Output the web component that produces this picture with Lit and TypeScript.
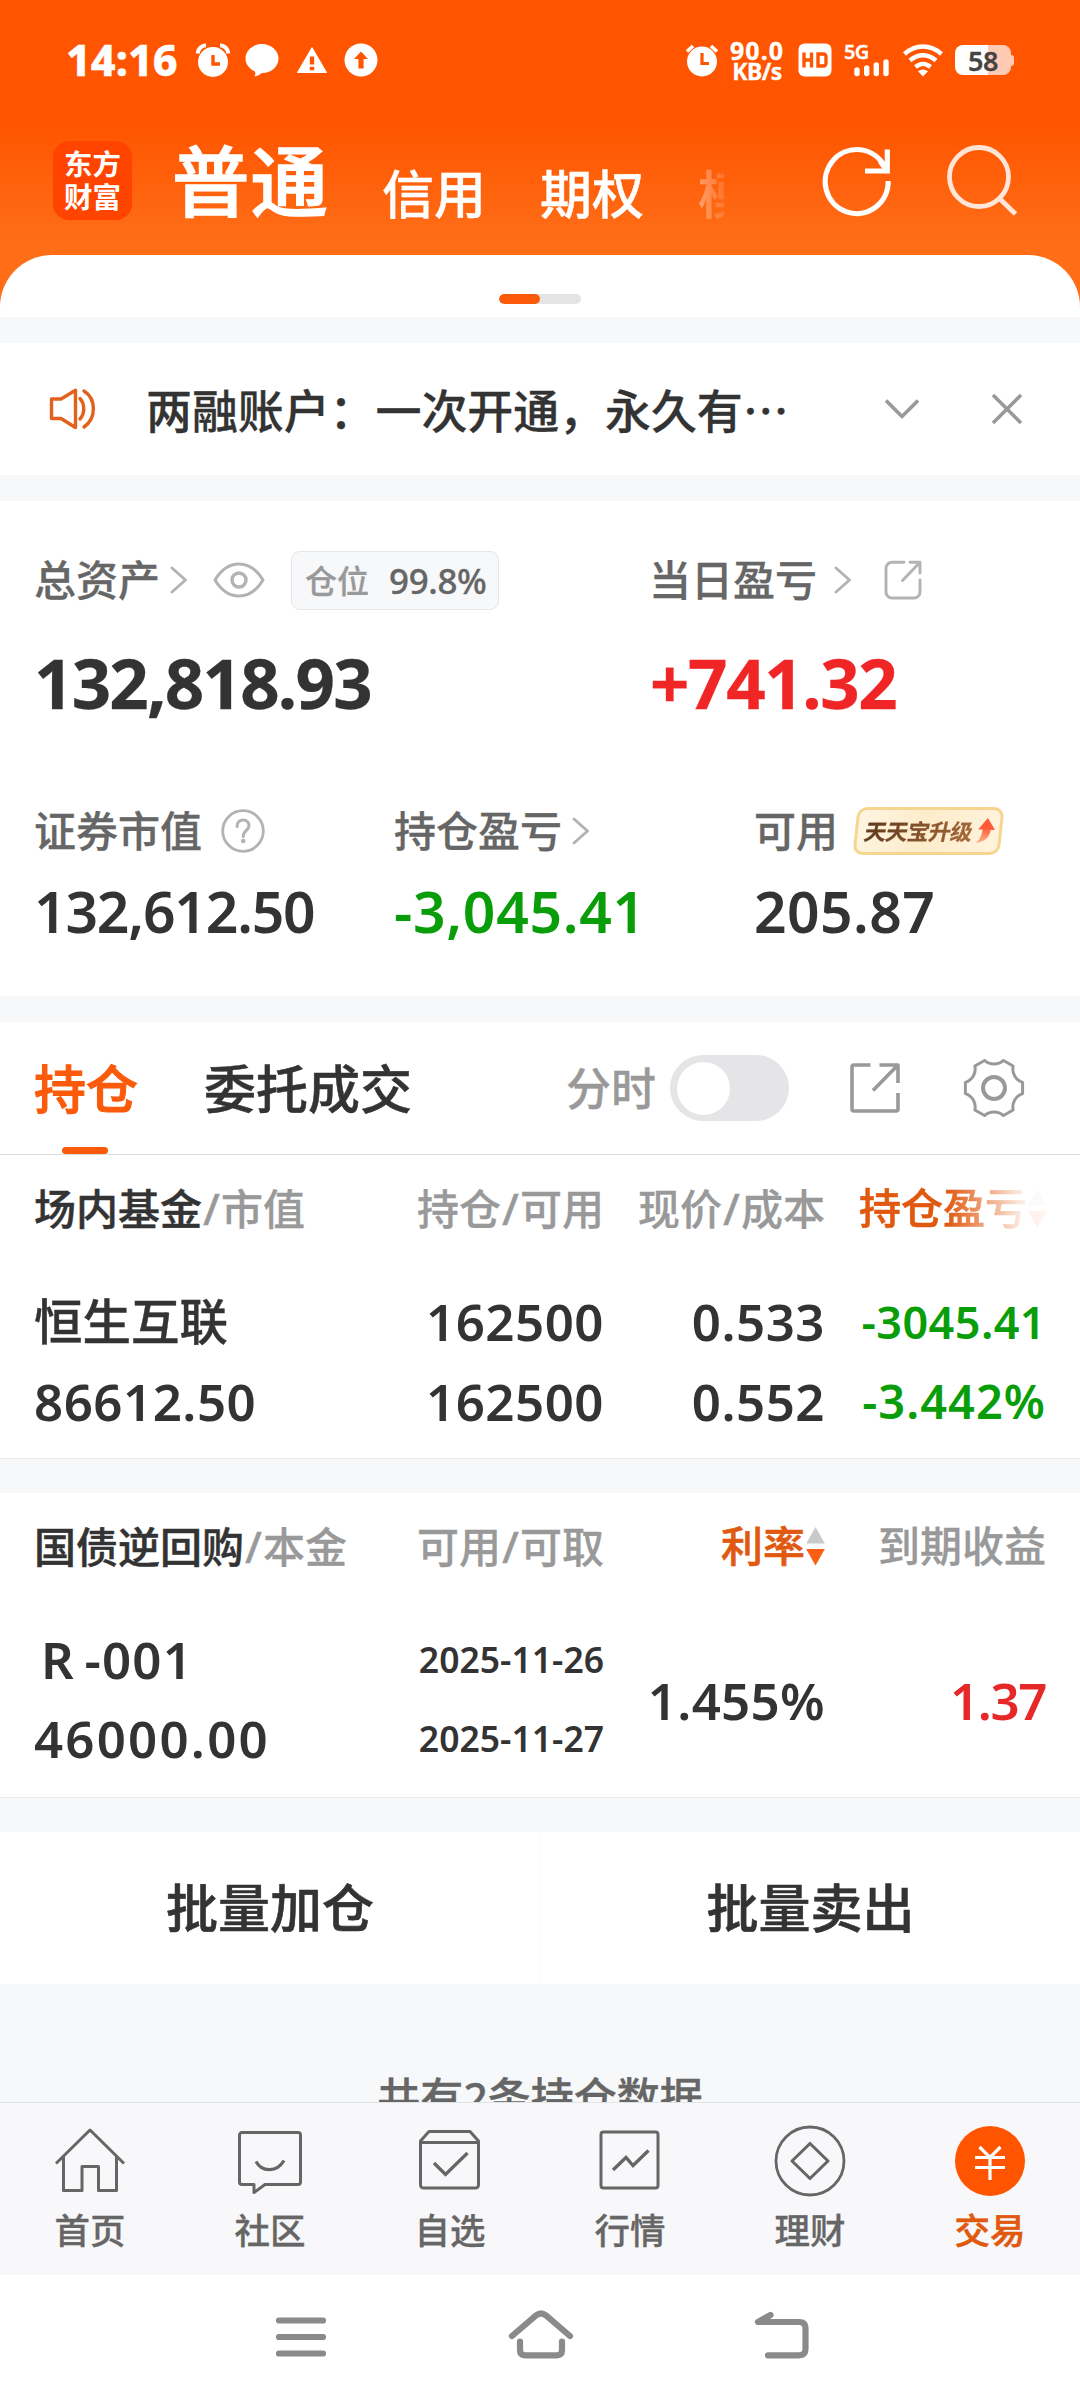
import { LitElement, html, css, svg, nothing } from "lit";
import { customElement, property } from "lit/decorators.js";
import { classMap } from "lit/directives/class-map.js";

/* Six-lobed cog outline around (0,0), lobes at radius 30. */
const cog = (() => {
  let d = "";
  for (let i = 0; i < 6; i++) {
    const a = (-i * Math.PI) / 3;
    const rot = (x: number, y: number) =>
      `${(x * Math.cos(a) - y * Math.sin(a)).toFixed(2)} ${(x * Math.sin(a) + y * Math.cos(a)).toFixed(2)}`;
    d += i === 0 ? `M${rot(28.6, 5.6)}` : `A14 14 0 0 1 ${rot(28.6, 5.6)}`;
    d += `L${rot(28.6, -5.6)}`;
  }
  return d + `A14 14 0 0 1 28.6 5.6Z`;
})();

/* name -> [viewBox width, viewBox height, drawing] */
const ICONS: Record<string, [number, number, unknown]> = {
  alarm: [34, 34, svg`
    <circle cx="17" cy="19" r="15" fill="currentColor"/>
    <path d="M1.6 10.5A9 9 0 0 1 10 2.2M32.4 10.5A9 9 0 0 0 24 2.2" stroke="currentColor" stroke-width="4"/>
    <path d="M17 12v9h7" stroke="#ff5500" stroke-width="3.4"/>`],
  alarmThin: [34, 34, svg`
    <circle cx="17" cy="18.5" r="15" fill="currentColor"/>
    <path d="M2 8.5L8 3M32 8.5L26 3" stroke="currentColor" stroke-width="3.6"/>
    <path d="M17 10v10.500h7" stroke="#ff5500" stroke-width="3.2"/>`],
  bubble: [34, 34, svg`
    <path d="M17 1C26 1 33.500 7.500 33.500 15.500C33.500 24 26 30 17 30C15 31.500 12.500 33 9.500 33.500C10.500 31.500 10.500 30 10 28.500C4.500 26 .5 21.500 .5 15.500C.5 7.500 8 1 17 1Z" fill="currentColor"/>`],
  warn: [30, 26, svg`
    <path d="M15 .6L29.500 25.500H.5Z" fill="currentColor" stroke="currentColor" stroke-linejoin="round"/>
    <path d="M15 9.500v8M15 19.800v3.400" stroke="#ff5500" stroke-width="4.400"/>`],
  up: [34, 34, svg`
    <circle cx="17" cy="17" r="16.500" fill="currentColor"/>
    <path d="M17 8.500L24 16h-4.400v9.500h-5.200V16H10Z" fill="#ff5500"/>`],
  hd: [34, 34, svg`
    <rect x=".5" y=".5" width="33" height="33" rx="6" fill="currentColor"/>
    <path d="M6 9.500v15M6 17h7M13.500 9.500v15M20 11h5.500a2.500 2.500 0 0 1 2.500 2.500v7a2.500 2.500 0 0 1-2.500 2.500H20Z" stroke="#ff5500" stroke-width="3.400"/>`],
  bars: [36, 17, svg`
    <path d="M3 11v3.500M12.700 9v5.500M22.300 6v8.500M32 3v11.500" stroke="currentColor" stroke-width="5.400" stroke-linecap="round"/>`],
  wifi: [42, 34, svg`
    <path d="M2.500 11C13.500 1 28.500 1 39.500 11M8 17.500C16 10.500 26 10.500 34 17.500M13.500 24C18 20 24 20 28.500 24" stroke="currentColor" stroke-width="4.400"/>
    <path d="M21 33.500L16 28.300Q21 24.500 26 28.300Z" fill="currentColor"/>`],
  refresh: [72, 72, svg`
    <path d="M66.200 35A31.500 32 0 1 1 62.500 20.500M65.300 3.500V25H43" stroke="currentColor" stroke-width="5.200"/>
    <path d="M58 15L65 25" stroke="currentColor" stroke-width="5"/>`],
  search: [72, 72, svg`
    <circle cx="32" cy="33" r="29.500" stroke="currentColor" stroke-width="4.800"/>
    <path d="M53 55L68.500 70" stroke="currentColor" stroke-width="4.800"/>`],
  speaker: [50, 44, svg`
    <path d="M3.500 12H13L27.500 3.200V40.500L13 31.500H3.500Z" stroke="currentColor" stroke-width="3.400" stroke-linejoin="round"/>
    <path d="M32 11.500C37 17 37 26.500 32 32M36 4C48.500 12 48.500 31 36 40" stroke="currentColor" stroke-width="3.400" stroke-linecap="round"/>`],
  down: [36, 22, svg`<path d="M2 2.500L18 18.500L34 2.500" stroke="currentColor" stroke-width="3.600"/>`],
  close: [32, 32, svg`<path d="M2 2L30 30M30 2L2 30" stroke="currentColor" stroke-width="3.600"/>`],
  right: [18, 28, svg`<path d="M2 2L15.500 14L2 26" stroke="currentColor" stroke-width="3" stroke-linecap="round" stroke-linejoin="round"/>`],
  eye: [52, 36, svg`
    <path d="M2 18C8 8 16 2 26 2S44 8 50 18C44 28 36 34 26 34S8 28 2 18Z" stroke="currentColor" stroke-width="3" stroke-linejoin="round"/>
    <circle cx="26" cy="18" r="7" stroke="currentColor" stroke-width="3.400"/>`],
  shareRound: [38, 40, svg`
    <path d="M20 2.200H8A6 6 0 0 0 2 8V32A6 6 0 0 0 8 38H30A6 6 0 0 0 36 32V20M26 2.200H36V13M36 2.200L18.500 20.500" stroke="currentColor" stroke-width="2.900" stroke-linecap="round" stroke-linejoin="round"/>`],
  help: [44, 44, svg`
    <circle cx="22" cy="22" r="20.300" stroke="currentColor" stroke-width="2.800"/>
    <path d="M16 17.500C16 9 28 9 28 16.500C28 21.500 22.200 21.500 22.200 27.500" stroke="currentColor" stroke-width="3" stroke-linecap="round"/>
    <circle cx="22.200" cy="32" r="2.300" fill="currentColor"/>`],
  share: [52, 52, svg`
    <path d="M21.500 3H5A2 2 0 0 0 3 5V47A2 2 0 0 0 5 49H47A2 2 0 0 0 49 47V31M30.500 3H49V21M49 3L24 28.500" stroke="currentColor" stroke-width="3.600" stroke-linejoin="round"/>`],
  gear: [62, 62, svg`
    <g transform="translate(31 31)"><path d="${cog}" stroke="currentColor" stroke-width="3" stroke-linejoin="round"/>
    <circle r="11" stroke="currentColor" stroke-width="4"/></g>`],
  sort: [19, 40, svg`
    <path d="M9.500 1L18.800 17.500H.2Z" fill="#c9c9cb"/><path d="M9.500 39.500L18.800 23H.2Z" fill="#fa5f14"/>`],
  home: [72, 72, svg`
    <path d="M2 39.500L36 6L70 39.500M9.500 33V66.500H28V42.500H44.500V66.500H62.500V33" stroke="currentColor" stroke-width="3" stroke-linejoin="round"/>`],
  chat: [72, 72, svg`
    <path d="M7 8.500H64A2.500 2.500 0 0 1 66.500 11V58A2.500 2.500 0 0 1 64 60.500H31L20 68.500V60.500H8A2.500 2.500 0 0 1 5.500 58V11A2.500 2.500 0 0 1 8 8.500Z" stroke="currentColor" stroke-width="3" stroke-linejoin="round"/>
    <path d="M22 37.500C28 48.500 43 48.500 50 36.500" stroke="currentColor" stroke-width="3.200"/>`],
  box: [72, 72, svg`
    <path d="M6.500 17L15 7.500H56L64.500 17V61A3 3 0 0 1 61.500 64H9.500A3 3 0 0 1 6.500 61ZM6.500 18.500H64.500" stroke="currentColor" stroke-width="3" stroke-linejoin="round"/>
    <path d="M20 39L31.500 50.500L53.500 29" stroke="currentColor" stroke-width="3.300"/>`],
  chart: [72, 72, svg`
    <rect x="7" y="8" width="57" height="56" rx="2.500" stroke="currentColor" stroke-width="3"/>
    <path d="M19 46L32 33.500L39 41.500L54.500 26.500" stroke="currentColor" stroke-width="3.300"/>`],
  coin: [72, 72, svg`
    <circle cx="36" cy="37" r="34" stroke="currentColor" stroke-width="2.800"/>
    <path d="M36 19.500L54 37L36 54.500L18 37Z" stroke="currentColor" stroke-width="3.100" stroke-linejoin="round"/>`],
  yuan: [72, 72, svg`
    <circle cx="36" cy="37" r="35" fill="#ff5500"/>
    <path d="M25.500 23L36 33.500L46.500 23M36 33.500V56M21 33.500H51M21 43.500H51" stroke="#fff" stroke-width="3.200"/>`],
  sysMenu: [52, 42, svg`<path d="M4 4.500H48M4 21H48M4 37.500H48" stroke="currentColor" stroke-width="6.200" stroke-linecap="round"/>`],
  sysHome: [66, 50, svg`
    <path d="M4 27L28 6.500Q33 2.500 38 6.500L62 27M12 32.500V41Q12 46.300 17 46.300H49Q54 46.300 54 41V32.500" stroke="currentColor" stroke-width="6.200" stroke-linecap="round"/>`],
  sysBack: [56, 50, svg`
    <path d="M16.500 6L4 13H45Q51.500 13 51.500 19V40Q51.500 46.300 45 46.300H14" stroke="currentColor" stroke-width="6.200" stroke-linecap="round" stroke-linejoin="round"/>`],
};

@customElement("app-icon")
class AppIcon extends LitElement {
  @property() name = "";
  static styles = css`
    :host { display: inline-flex; flex: none; }
    svg { display: block; overflow: visible; }
  `;
  render() {
    const icon = ICONS[this.name];
    if (!icon) return nothing;
    const [w, h, body] = icon;
    return html`<svg width=${w} height=${h} viewBox="0 0 ${w} ${h}" fill="none">${body}</svg>`;
  }
}

const TABS = [
  { icon: "home", label: "首页" },
  { icon: "chat", label: "社区" },
  { icon: "box", label: "自选" },
  { icon: "chart", label: "行情" },
  { icon: "coin", label: "理财" },
  { icon: "yuan", label: "交易", on: true },
];

@customElement("app-root")
class AppRoot extends LitElement {
  static styles = css`
    :host {
      display: flex; flex-direction: column; width: 1080px; height: 2400px; overflow: hidden;
      background: #f7f8fa; color: #333; white-space: nowrap;
      font-family: "Noto Sans", "Noto Sans CJK SC", sans-serif; font-weight: 500; line-height: 1;
      -webkit-text-stroke: .3px currentColor;
    }
    * { box-sizing: border-box; }
    .row { display: flex; align-items: center; }

    .top { height: 317px; flex: none; display: flex; flex-direction: column; color: #fff;
      background: linear-gradient(#ff5500 0, #ff5500 125px, #ff6d17 240px, #ff6d17 100%); }
    .status { height: 120px; padding-left: 66px; }
    .clock { width: 130px; font-size: 43px; font-weight: 800; padding-bottom: 2px; letter-spacing: 0; }
    .status .g1 { margin-right: 15px; }
    .status .g2 { margin-right: 18px; }
    .status .g3 { margin-right: 17px; }
    .net { width: 62px; margin: 0 10px 0 7px; text-align: center; font-weight: 700; }
    .net .a { font-size: 25px; line-height: 22px; letter-spacing: 1px; }
    .net .b { font-size: 23px; line-height: 21px; letter-spacing: -.6px; }
    .right { margin-left: 307px; }
    .sig { width: 46px; height: 32px; margin: 0 12px 0 12px; display: flex; flex-direction: column; align-items: flex-end; justify-content: flex-end; }
    .sig .g { align-self: flex-start; font-size: 20px; line-height: 14px; font-weight: 600; letter-spacing: -.7px; }
    .batt { width: 56px; height: 30px; margin-left: 11px; border-radius: 8px; color: #444; font-size: 27px; font-weight: 600; letter-spacing: -.4px;
      display: flex; align-items: center; justify-content: center; background: linear-gradient(90deg, #fff 33px, #ffcab4 33px); }
    .nub { width: 3px; height: 11px; background: #ffcab4; border-radius: 0 3px 3px 0; }

    .nav { height: 135px; padding-left: 53px; align-items: flex-start; }
    .logo { width: 79px; height: 79px; margin-top: 21px; border-radius: 16px; background: #ff4400; display: grid; place-content: center;
      font-size: 28.500px; line-height: 33px; font-weight: 700; -webkit-text-stroke-width: 0; }
    .acct { font-size: 52px; line-height: 60px; margin: 45px 0 0 54px; -webkit-text-stroke-width: .4px; }
    .acct.on { font-size: 77.500px; line-height: 90px; margin: 16px 0 0 40px; letter-spacing: 1px; width: 160px; -webkit-text-stroke-width: 1.300px; }
    .acct.first { margin: 44px 0 0 50px; }
    .acct.next { margin-top: 44px; }
    .acct.fade { margin-top: 44px; width: 26px; overflow: hidden; -webkit-mask-image: linear-gradient(90deg, rgba(0,0,0,.38), rgba(0,0,0,.12)); mask-image: linear-gradient(90deg, rgba(0,0,0,.38), rgba(0,0,0,.12)); }
    .nav .ic1 { margin: 26px 0 0 98px; }
    .nav .ic2 { margin: 24px 0 0 53px; opacity: .84; }
    .sheet { flex: 1; background: #fff; border-radius: 52px 52px 0 0; display: flex; justify-content: center; padding-top: 39px; }
    .pager { width: 82px; height: 10px; border-radius: 5px; background: #e4e4e4; overflow: hidden; }
    .pager .dot { width: 41px; height: 10px; border-radius: 5px; background: #fb5a0b; }

    .notice { height: 132px; flex: none; margin-top: 26px; background: #fff; padding: 0 57px 0 48px; color: #e2611c; }
    .notice .msg { width: 738px; margin-left: 48px; color: #333; font-size: 46px; letter-spacing: -.1px; font-family: "Noto Sans CJK SC", sans-serif; line-height: 60px; padding-bottom: 2px; }
    .notice .grey { color: #999; }
    .notice .close { margin-left: 71px; }

    .assets { height: 495px; flex: none; margin-top: 26px; background: #fff; padding: 43px 34px 0; color: #666; font-size: 42px; }
    .two { display: grid; grid-template-columns: 615px 1fr; }
    .three { display: grid; grid-template-columns: 360px 360px 1fr; }
    .lab { height: 72px; }
    .lab app-icon { color: #b3b3b3; }
    .lab .c1 { margin-left: 10px; }
    .lab .eye { margin-left: 25px; }
    .lab .c2 { margin-left: 17px; }
    .lab .sh { margin-left: 32px; }
    .lab .hp { margin-left: 19px; }
    .chip { height: 59px; margin: 1px 0 0 26px; width: 208px; padding-left: 13px; border: 1px solid #e6e6e8; border-radius: 9px; background: #f7f8fa; font-size: 32px; color: #999; }
    .chip .pct { margin-left: 20px; color: #666; font-size: 35px; letter-spacing: -.4px; font-weight: 500; }
    .big { height: 100px; margin-top: 16px; color: #333; font-size: 69px; font-weight: 700; letter-spacing: -1.800px; align-items: center; }
    .big .red { letter-spacing: -1.400px; padding-left: 1px; }
    .lab.second { height: 60px; margin-top: 69px; }
    .mid { height: 70px; margin-top: 15px; color: #333; font-size: 57px; font-weight: 600; letter-spacing: -1.200px; align-items: center; -webkit-text-stroke-width: 0; }
    .mid .green { letter-spacing: .7px; }
    .mid .cash { letter-spacing: .4px; }
    .red { color: #f02626; }
    .green { color: #0a9d0a; }
    .badge { margin-left: 17px; width: 147px; height: 48px; border: 3px solid #f6d68f; border-radius: 10px; transform: skewX(-6deg);
      background: linear-gradient(100deg, #fef5e2, #fdeccb 45%, #fff3dc); padding-left: 7px; font-size: 22px; font-weight: 700; letter-spacing: -.5px; color: #80502c; }
    .badge .t { transform: skewX(-6deg); background: linear-gradient(90deg, #5f3a1c, #a5683a); -webkit-background-clip: text; background-clip: text; color: transparent; line-height: 30px; }
    .badge svg { margin-left: 3px; flex: none; }

    .tabs { height: 133px; flex: none; margin-top: 26px; background: #fff; border-bottom: 1px solid #dedee0; padding-left: 34px; align-items: stretch; font-size: 52px; }
    .tab { display: flex; flex-direction: column; align-items: center; line-height: 134px; height: 132px; -webkit-text-stroke-width: .5px; }
    .tab.on { color: #fa5a0a; width: 104px; -webkit-text-stroke-width: 1px; }
    .tab .bar { width: 46px; height: 7px; margin: -9px 2px 0 0; border-radius: 4px; background: #fa5a0a; flex: none; }
    .tab.b { margin-left: 66px; }
    .ctl { margin-left: 154px; color: #999; font-size: 45px; }
    .toggle { width: 119px; height: 66px; border-radius: 33px; background: #e5e5e7; margin-left: 14px; padding-left: 7px; }
    .knob { width: 53px; height: 53px; border-radius: 50%; background: #fff; }
    .ctl .s1 { margin-left: 60px; }
    .ctl .s2 { margin-left: 62px; }

    .table { flex: none; background: #fff; border-bottom: 1px solid #eaeaec; padding: 0 34px; }
    .t1 { height: 304px; padding-top: 13px; }
    .t2 { height: 305px; padding-top: 13px; margin-top: 34px; }
    .grid { display: grid; grid-template-columns: 366px 204px 221px 221px; align-items: center; }
    .grid > div { text-align: right; }
    .grid > div:first-child { text-align: left; }
    .head { height: 80px; font-size: 42px; color: #999; }
    .head .k { color: #333; -webkit-text-stroke-width: .5px; }
    .sl { margin: 0 1px; font-size: 44px; }
    .hot { color: #e0590f; display: flex; justify-content: flex-end; align-items: center; -webkit-text-stroke-width: .6px; }
    .hot app-icon { margin-left: 1px; }
    .grid > .faded { margin-right: -1px; -webkit-mask-image: linear-gradient(90deg, #000 122px, rgba(0,0,0,.12) 196px, rgba(0,0,0,.05)); mask-image: linear-gradient(90deg, #000 122px, rgba(0,0,0,.12) 196px, rgba(0,0,0,.05)); }
    .cells { font-size: 51px; letter-spacing: .5px; height: 80px; font-weight: 600; padding-bottom: 2px; -webkit-text-stroke-width: 0; }
    .cells.r1 { margin-top: 34px; }
    .cells .cn { font-size: 48.500px; letter-spacing: 0; font-weight: 500; -webkit-text-stroke-width: .4px; }
    .cells .p1 { font-size: 45px; letter-spacing: .4px; }
    .cells .p2 { font-size: 47px; letter-spacing: 1px; }
    .body2 { display: grid; grid-template-columns: 366px 204px 221px 221px; margin-top: 34px; height: 160px; font-size: 51px; font-weight: 600; align-items: center; text-align: right; letter-spacing: .5px; -webkit-text-stroke-width: 0; }
    .stack { display: grid; grid-template-rows: 79px 79px; align-items: center; height: 160px; }
    .stack.l { text-align: left; white-space: pre; letter-spacing: 2.200px; }
    .stack .rname { letter-spacing: 1.200px; padding-left: 7px; word-spacing: -5px; }
    .stack.d { font-size: 35.500px; letter-spacing: 0; }
    .body2 .rate { letter-spacing: .3px; }
    .body2 .inc { color: #e62828; letter-spacing: -1.400px; }

    .acts { height: 152px; flex: none; margin-top: 34px; display: grid; grid-template-columns: 539px 540px; gap: 1px; font-size: 52px; -webkit-text-stroke-width: .6px; }
    .act { background: #fff; display: grid; place-items: center; padding-left: 1px; }
    .count { flex: none; height: 118px; overflow: hidden; text-align: center; padding-top: 90px; font-size: 43px; line-height: 48px; color: #666; }

    .tabbar { height: 173px; flex: none; border-top: 1px solid #e2e3e5; background: #f8f8fa; display: grid; grid-template-columns: repeat(6, 180px); padding-top: 21px; color: #666; font-size: 35.500px; }
    .item { display: flex; flex-direction: column; align-items: center; }
    .item .l { line-height: 40px; margin-top: 14px; }
    .item.on { color: #e0590f; }
    .item.on .l { -webkit-text-stroke-width: .6px; }
    .sys { flex: 1; background: #fff; color: #8a8a8a; display: flex; padding-left: 275px; }
    .sys .m { margin-top: 41px; }
    .sys .h { margin: 34px 0 0 181px; }
    .sys .b { margin: 34px 0 0 180px; }
  `;

  private top() {
    return html`<div class="top">
      <div class="status row">
        <div class="clock">14:16</div>
        <app-icon class="g1" name="alarm"></app-icon>
        <app-icon class="g2" name="bubble"></app-icon>
        <app-icon class="g3" name="warn"></app-icon>
        <app-icon name="up"></app-icon>
        <app-icon class="right" name="alarmThin"></app-icon>
        <div class="net"><div class="a">90.0</div><div class="b">KB/s</div></div>
        <app-icon name="hd"></app-icon>
        <div class="sig"><div class="g">5G</div><app-icon name="bars"></app-icon></div>
        <app-icon name="wifi"></app-icon>
        <div class="batt">58</div><div class="nub"></div>
      </div>
      <div class="nav row">
        <div class="logo"><div>东方</div><div>财富</div></div>
        <div class="acct on">普通</div>
        <div class="acct first">信用</div>
        <div class="acct next">期权</div>
        <div class="acct fade">模拟</div>
        <app-icon class="ic1" name="refresh"></app-icon>
        <app-icon class="ic2" name="search"></app-icon>
      </div>
      <div class="sheet"><div class="pager"><div class="dot"></div></div></div>
    </div>`;
  }

  private assets() {
    return html`<div class="assets">
      <div class="two">
        <div class="lab row">总资产<app-icon class="c1" name="right"></app-icon><app-icon class="eye" name="eye"></app-icon>
          <div class="chip row">仓位<span class="pct">99.8%</span></div></div>
        <div class="lab row">当日盈亏<app-icon class="c2" name="right"></app-icon><app-icon class="sh" name="shareRound"></app-icon></div>
      </div>
      <div class="two big"><div>132,818.93</div><div class="red">+741.32</div></div>
      <div class="three">
        <div class="lab second row">证券市值<app-icon class="hp" name="help"></app-icon></div>
        <div class="lab second row">持仓盈亏<app-icon class="c1" name="right"></app-icon></div>
        <div class="lab second row">可用<div class="badge row"><span class="t">天天宝升级</span>
          <svg width="19" height="26" viewBox="0 0 19 26"><defs><linearGradient id="g" x1="0" y1="1" x2="0" y2="0"><stop stop-color="#ffb592"/><stop offset=".6" stop-color="#ff5a36"/></linearGradient></defs>
            <path d="M10.500 0L19 12H14.500C14.500 19 10 24 1 25C5 21 6.500 17 6.500 11.500H2Z" fill="url(#g)"/></svg></div></div>
      </div>
      <div class="three mid"><div>132,612.50</div><div class="green">-3,045.41</div><div class="cash">205.87</div></div>
    </div>`;
  }

  private holdings() {
    return html`
      <div class="tabs row">
        <div class="tab on">持仓<div class="bar"></div></div>
        <div class="tab b">委托成交</div>
        <div class="ctl row">分时<div class="toggle row"><div class="knob"></div></div>
          <app-icon class="s1" name="share"></app-icon><app-icon class="s2" name="gear"></app-icon></div>
      </div>
      <div class="table t1">
        <div class="grid head">
          <div><span class="k">场内基金</span><span class="sl">/</span>市值</div>
          <div>持仓<span class="sl">/</span>可用</div>
          <div>现价<span class="sl">/</span>成本</div>
          <div class="hot faded">持仓盈亏<app-icon name="sort"></app-icon></div>
        </div>
        <div class="grid cells r1"><div class="cn">恒生互联</div><div>162500</div><div>0.533</div><div class="green p1">-3045.41</div></div>
        <div class="grid cells"><div>86612.50</div><div>162500</div><div>0.552</div><div class="green p2">-3.442%</div></div>
      </div>
      <div class="table t2">
        <div class="grid head">
          <div><span class="k">国债逆回购</span><span class="sl">/</span>本金</div>
          <div>可用<span class="sl">/</span>可取</div>
          <div class="hot">利率<app-icon name="sort"></app-icon></div>
          <div>到期收益</div>
        </div>
        <div class="body2">
          <div class="stack l"><div class="rname">R -001</div><div>46000.00</div></div>
          <div class="stack d"><div>2025-11-26</div><div>2025-11-27</div></div>
          <div class="rate">1.455%</div>
          <div class="inc">1.37</div>
        </div>
      </div>`;
  }

  render() {
    return html`
      ${this.top()}
      <div class="notice row">
        <app-icon name="speaker"></app-icon>
        <div class="msg">两融账户：一次开通，永久有…</div>
        <app-icon class="grey" name="down"></app-icon>
        <app-icon class="grey close" name="close"></app-icon>
      </div>
      ${this.assets()}
      ${this.holdings()}
      <div class="acts"><div class="act">批量加仓</div><div class="act">批量卖出</div></div>
      <div class="count">共有2条持仓数据</div>
      <div class="tabbar">
        ${TABS.map((t) => html`<div class=${classMap({ item: true, on: !!t.on })}><app-icon name=${t.icon}></app-icon><div class="l">${t.label}</div></div>`)}
      </div>
      <div class="sys"><app-icon class="m" name="sysMenu"></app-icon><app-icon class="h" name="sysHome"></app-icon><app-icon class="b" name="sysBack"></app-icon></div>
    `;
  }
}
